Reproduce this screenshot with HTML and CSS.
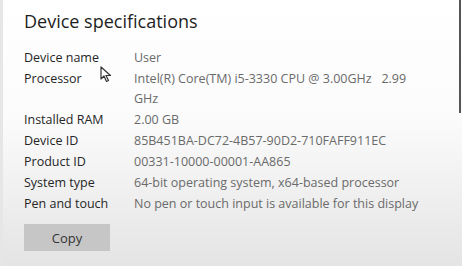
FILE: index.html
```html
<!DOCTYPE html>
<html lang="en">
<head>
    <meta charset="UTF-8">
    <title>Device specifications</title>
    <link rel="stylesheet" href="styles.css">
</head>
<body>
    <div class="edge"></div>

    <!-- Device specifications panel -->
    <div class="panel">
        <h1>Device specifications</h1>

        <div class="specs">
            <div class="label">Device name</div>
            <div class="value">User</div>

            <div class="label">Processor</div>
            <div class="value">Intel(R) Core(TM) i5-3330 CPU @ 3.00GHz &nbsp; 2.99 GHz</div>

            <div class="label">Installed RAM</div>
            <div class="value">2.00 GB</div>

            <div class="label">Device ID</div>
            <div class="value">85B451BA-DC72-4B57-90D2-710FAFF911EC</div>

            <div class="label">Product ID</div>
            <div class="value">00331-10000-00001-AA865</div>

            <div class="label">System type</div>
            <div class="value">64-bit operating system, x64-based processor</div>

            <div class="label">Pen and touch</div>
            <div class="value">No pen or touch input is available for this display</div>
        </div>

        <button class="copy-btn">Copy</button>
    </div>

    <!-- scrollbar thumb -->
    <div class="scroll-thumb"></div>

    <!-- mouse pointer -->
    <svg class="cursor" width="12" height="17" viewBox="0 0 12 17">
        <path d="M1 1 L1 13 L4 10 L6.5 15.5 L8.5 14.5 L6 9.5 L10.5 9.5 Z" fill="#fff" stroke="#333" stroke-width="1.2" stroke-linejoin="round"/>
    </svg>
</body>
</html>
```

FILE: styles.css
```css
/* General Styles */
body {
    font-family: "Open Sans", "Noto Sans", sans-serif;
    margin: 0;
    padding: 0;
    width: 462px;
    height: 266px;
    overflow: hidden;
    position: relative;
    background: linear-gradient(to bottom, #ffffff 0%, #fbfbfb 45%, #e4e4e4 100%);
    display: flex;
}

.edge {
    width: 3px;
    background-color: #e6e6e6;
}

.panel {
    padding: 9px 0 0 21px;
}

h1 {
    font-size: 18px;
    font-weight: 400;
    color: #1e1e1e;
    margin: 0 0 15px 0;
}

/* Specs table */
.specs {
    display: grid;
    grid-template-columns: 110px 286px;
    row-gap: 1px;
    font-size: 12.5px;
    line-height: 20px;
}

.label {
    color: #262626;
}

.value {
    color: #6a6a6a;
}

.copy-btn {
    margin-top: 10px;
    width: 86px;
    height: 27px;
    border: none;
    background-color: #c6c6c6;
    color: #333;
    font-family: inherit;
    font-size: 13px;
}

.scroll-thumb {
    position: absolute;
    right: 1px;
    top: 0;
    width: 2px;
    height: 113px;
    background-color: #555;
}

.cursor {
    position: absolute;
    left: 100px;
    top: 66px;
}
```
